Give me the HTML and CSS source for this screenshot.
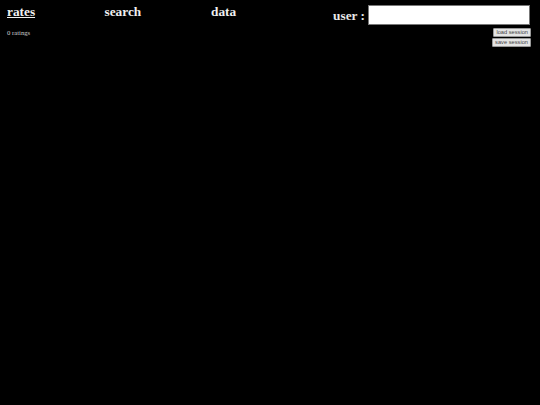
FILE: index.html
```html
<!DOCTYPE html>
<html lang="en">
<head>
    <meta charset="UTF-8">
    <title>rates</title>
    <link rel="stylesheet" href="styles.css">
</head>
<body>
    <div class="top">
        <div class="left">
            <nav class="tabs">
                <a class="tab active" href="#">rates</a>
                <a class="tab" href="#">search</a>
                <a class="tab" href="#">data</a>
            </nav>
            <p class="count">0 ratings</p>
        </div>
        <div class="session">
            <div class="userBox">
                <label for="user">user :</label>
                <input type="text" id="user">
            </div>
            <button type="button">load session</button>
            <button type="button">save session</button>
        </div>
    </div>
</body>
</html>
```

FILE: styles.css
```css
* {
    margin: 0;
    padding: 0;
    box-sizing: border-box;
}

body {
    background: #000;
    color: #fff;
    height: 405px;
    overflow: hidden;
    font-family: "Liberation Serif", serif;
}

.top {
    display: flex;
    justify-content: space-between;
    padding: 4px 9px 0 7px;
}

.tabs {
    display: flex;
}

.tab {
    color: #f0f0f0;
    font-size: 13.3px;
    font-weight: bold;
    line-height: 16px;
    text-decoration: none;
    width: 97.5px;
}

.tab:last-child {
    width: auto;
}

.tab:nth-child(2) {
    width: 106.5px;
}

.tab.active {
    text-decoration: underline;
}

.count {
    font-size: 6.7px;
    line-height: 8px;
    margin-top: 9px;
    color: #ccc;
}

.session {
    display: flex;
    flex-direction: column;
    align-items: flex-end;
    gap: 1px;
    padding-top: 1px;
}

.userBox {
    display: flex;
    align-items: center;
    gap: 3px;
    margin: 0 1px 2px 0;
}

.userBox label {
    font-size: 13.3px;
    font-weight: bold;
    color: #e8e8e8;
    padding-top: 2px;
}

.userBox input {
    width: 162px;
    height: 20px;
    background: #fff;
    border: 1px solid #777;
}

button {
    height: 9px;
    padding: 0 2px;
    background: #e4e4e4;
    border: 1px solid #999;
    border-radius: 1px;
    color: #444;
    font-family: "Liberation Sans", sans-serif;
    font-size: 5.7px;
    line-height: 7px;
}
```
